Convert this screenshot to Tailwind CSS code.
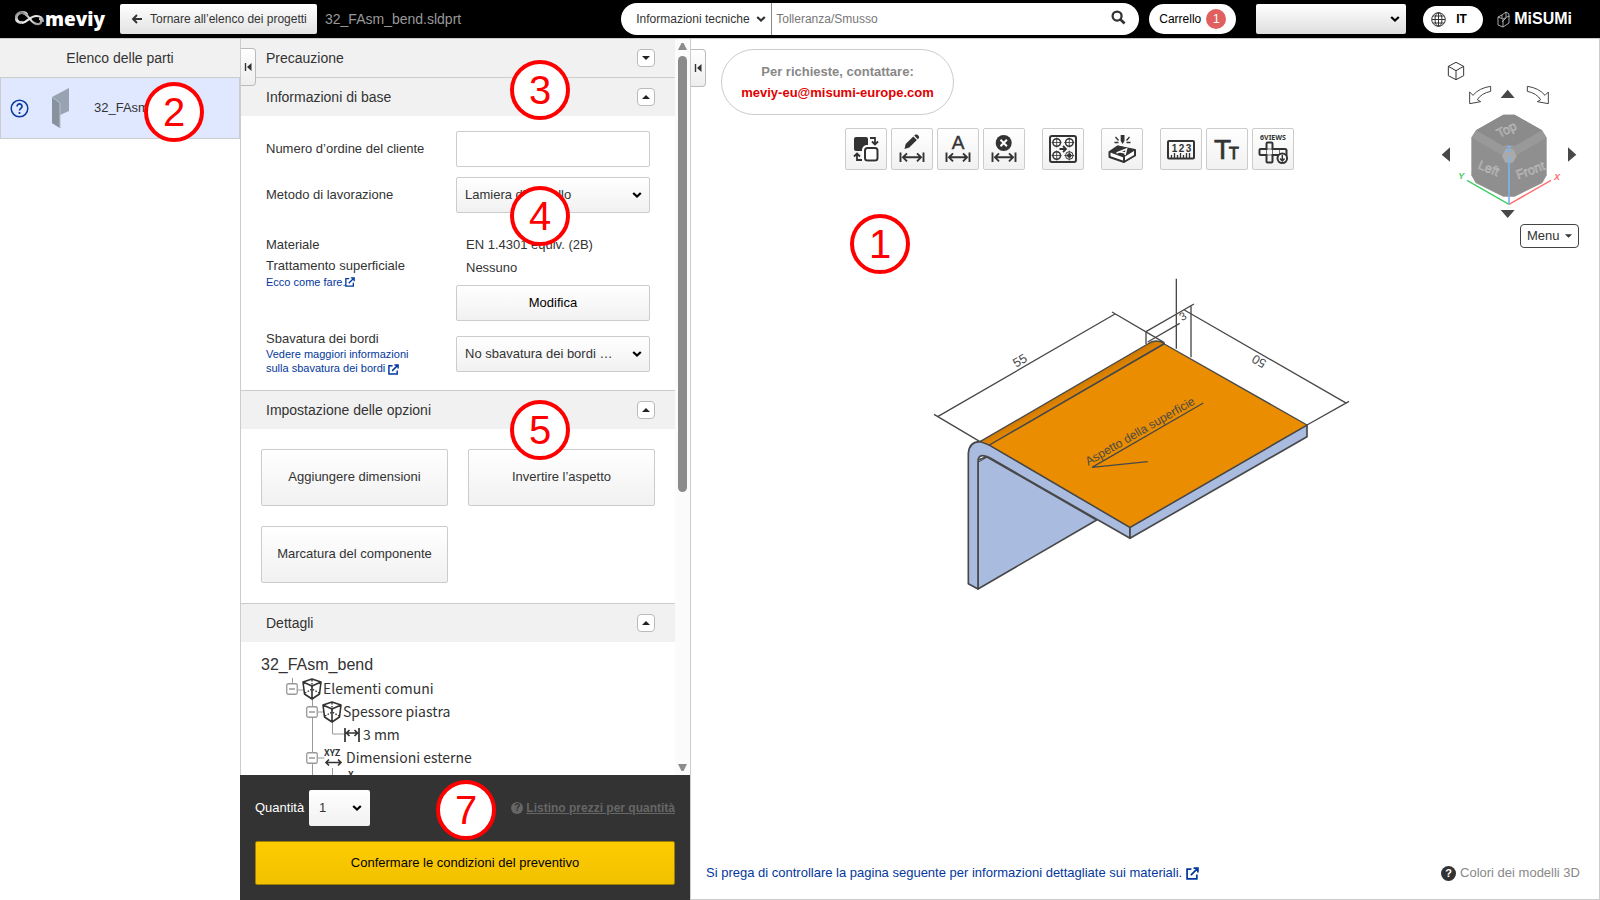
<!DOCTYPE html>
<html lang="it">

<head>
    <meta charset="UTF-8">
    <meta name="viewport" content="width=device-width, initial-scale=1.0">
    <title>meviy - 32_FAsm_bend.sldprt</title>
    <script src="https://cdn.jsdelivr.net/npm/@tailwindcss/browser@4"></script>
</head>

<body class="bg-white text-[#333] text-sm font-['Liberation_Sans',Arial,sans-serif]">
    <!-- shared symbols -->
    <svg class="hidden">
        <symbol id="chevron" viewBox="0 0 10 8">
            <path d="M1.2 2l3.8 3.6L8.800 2" fill="none" stroke="currentColor" stroke-width="2.2" />
        </symbol>
        <symbol id="external" viewBox="0 0 12 12">
            <path d="M5 2H1v9h9V7M4.500 7.500L10.500 1.500M7 1h4v4" fill="none" stroke="currentColor" stroke-width="1.6" />
        </symbol>
        <symbol id="collapse" viewBox="0 0 8 10">
            <path d="M1.500 1v8" stroke="currentColor" stroke-width="1.4" />
            <path d="M7.500 1v8L3 5z" fill="currentColor" />
        </symbol>
        <symbol id="measure" viewBox="0 0 42 42">
            <path d="M9.500 24.500V34M32.500 24.500V34M12 29.300h18M16 25.300l-4 4 4 4M26 25.300l4 4-4 4" fill="none" stroke="#333" stroke-width="1.900" />
        </symbol>
        <symbol id="box" viewBox="0 0 20 22">
            <path d="M10 1l9 3-1.500 12L10 21l-7.500-5L1 4zM1 4l9 4 9-4M10 8v13" fill="none" stroke="#333" stroke-width="1.600" stroke-linejoin="round" />
            <path d="M10 2v9M3 15l7-4 7 4" fill="none" stroke="#333" stroke-width="1.400" stroke-dasharray="1.500 1.500" />
        </symbol>
        <symbol id="minus" viewBox="0 0 12 12">
            <rect x=".75" y=".75" width="10.500" height="10.500" rx="1.500" fill="#fff" stroke="#999" stroke-width="1.300" />
            <path d="M3 6h6" stroke="#999" stroke-width="1.500" />
        </symbol>
    </svg>

    <div class="flex flex-col h-screen">
        <header class="flex shrink-0 items-center h-[38px] bg-black">
            <a href="#" class="flex items-center ml-[15px] w-[105px] text-white" aria-label="meviy">
                <svg class="w-[30px] h-[18px]" viewBox="0 0 30 18">
                    <defs>
                        <linearGradient id="silver" x1="0" y1="0" x2="1" y2="1">
                            <stop offset="0" stop-color="#777" />
                            <stop offset=".5" stop-color="#eee" />
                            <stop offset="1" stop-color="#888" />
                        </linearGradient>
                    </defs>
                    <path d="M12 5C10 1 3 2 1.500 6S4 14 8 12" fill="none" stroke="url(#silver)" stroke-width="3" />
                    <path d="M7 13c6-1 8-7 14-7 6 0 7 3 7 6M5 3c5-1 8 3 10 6s6 6 9 5 3-5 0-5" fill="none" stroke="url(#silver)" stroke-width="2.200" />
                </svg>
                <span class="font-['Open_Sans',sans-serif] font-extrabold text-[19px] leading-7">meviy</span>
            </a>
            <button class="flex items-center gap-2 h-[30px] w-[197px] pl-[11px] rounded-xs bg-linear-to-b from-white to-[#e2e2e2] text-xs whitespace-nowrap">
                <svg class="w-[11px] h-[10px]" viewBox="0 0 11 10">
                    <path d="M11 5H2M6 1L2 5l4 4" fill="none" stroke="#333" stroke-width="1.900" />
                </svg>
                Tornare all’elenco dei progetti
            </button>
            <span class="ml-2 text-[#999]">32_FAsm_bend.sldprt</span>

            <form class="flex items-center ml-auto w-[518px] h-8 rounded-full bg-white overflow-hidden">
                <div class="relative w-[151px] h-full border-r border-[#888]">
                    <select aria-label="Categoria" class="appearance-none w-full h-full pl-[15px] text-xs">
                        <option>Informazioni tecniche</option>
                    </select>
                    <svg class="absolute right-[5px] top-3 w-[10px] h-2 pointer-events-none"><use href="#chevron" /></svg>
                </div>
                <input type="text" aria-label="Cerca" placeholder="Tolleranza/Smusso" class="flex-1 h-full pl-1 text-xs outline-none placeholder:text-[#777]">
                <button type="button" class="mr-[13px] mb-1" aria-label="Cerca">
                    <svg class="w-[15px] h-[15px]" viewBox="0 0 16 16">
                        <circle cx="6.500" cy="6.500" r="4.800" fill="none" stroke="#333" stroke-width="2.400" />
                        <path d="M10 10l4.500 4.500" stroke="#333" stroke-width="3" />
                    </svg>
                </button>
            </form>
            <button class="flex items-center gap-[5px] ml-[10px] w-[87px] h-[30px] pl-[10px] rounded-full bg-white text-xs text-black">
                Carrello
                <span class="flex items-center justify-center w-5 h-5 rounded-full bg-[#e06060] text-white">1</span>
            </button>
            <div class="relative ml-5 text-black">
                <select aria-label="Account" class="appearance-none block w-[150px] h-[30px] rounded-xs bg-linear-to-b from-white to-[#dedede]">
                    <option></option>
                </select>
                <svg class="absolute right-[6px] top-[11px] w-[10px] h-2 pointer-events-none"><use href="#chevron" /></svg>
            </div>
            <button class="flex items-center gap-[10px] ml-[17px] w-[60px] h-[27px] pl-2 rounded-full bg-white text-black text-xs font-bold">
                <svg class="w-[15px] h-[15px]" viewBox="0 0 15 15">
                    <g fill="none" stroke="#333">
                        <circle cx="7.500" cy="7.500" r="6.800" />
                        <ellipse cx="7.500" cy="7.500" rx="3.500" ry="6.800" />
                        <path d="M7.500 1v13M1 7.500h13M2 4h11M2 11h11" />
                    </g>
                </svg>
                IT
            </button>
            <a href="#" class="flex items-center gap-1 ml-[14px] mr-[28px] text-white font-bold text-base" aria-label="MISUMI">
                <svg class="w-[13px] h-[17px]" viewBox="0 0 13 17">
                    <path d="M1 6l5 2v8l-5-2zM6 8l6-3v7l-6 4M1 6l4-2v3M5 4l4-3v5M9 1l3 2v3M5 11l4-4" fill="none" stroke="#bbb" stroke-width=".9" />
                </svg>
                MiSUMi
            </a>
        </header>

        <div class="relative flex flex-1 min-h-0 border-t border-[#ccc]">
            <!-- parts list -->
            <aside class="w-60 shrink-0">
                <h2 class="flex items-center justify-center h-[38px] bg-[#f1f1f1]">Elenco delle parti</h2>
                <div class="relative flex items-center h-[62px] border border-[#ccc] bg-[#dfe8ff]">
                    <svg class="ml-[9px] w-[19px] h-[19px]" viewBox="0 0 19 19">
                        <circle cx="9.500" cy="9.500" r="8.300" fill="none" stroke="#0a3a9e" stroke-width="1.500" />
                        <path d="M7 7.500c0-3.500 5.300-3.300 5 0 0 1.700-2.500 2-2.500 4" fill="none" stroke="#0a3a9e" stroke-width="1.700" />
                        <circle cx="9.500" cy="14" r="1.100" fill="#0a3a9e" />
                    </svg>
                    <svg class="ml-[22px] w-[19px] h-[42px]" viewBox="0 0 19 42">
                        <path d="M1 10L18 1v23l-9 4v13l-8-5z" fill="#98a3b1" />
                        <path d="M1 10l8 6v25l-8-5z" fill="#87929f" />
                        <path d="M1 10l8 6v25" fill="none" stroke="#b8c0c8" />
                    </svg>
                    <span class="ml-6 text-[13px]">32_FAsm_bend</span>
                    <span class="absolute left-[143px] top-1 flex items-center justify-center w-[60px] h-[60px] rounded-full border-4 border-[red] bg-white text-[red] text-[40px] leading-none">2</span>
                </div>
            </aside>

            <!-- settings -->
            <main class="relative flex flex-col w-[451px] shrink-0 border-x border-[#ccc]">
                <button aria-label="Chiudi elenco" class="absolute left-0 top-[9px] flex items-center justify-center w-[15px] h-[38px] rounded-r-sm border border-l-0 border-[#bbb] bg-linear-to-b from-white to-[#eee]">
                    <svg class="w-2 h-[10px]"><use href="#collapse" /></svg>
                </button>
                <div class="flex flex-1 min-h-0">
                    <div class="flex-1 overflow-hidden">
                        <section class="flex items-center justify-between h-[38px] pl-[25px] pr-5 bg-[#f1f1f1]">
                            <h2>Precauzione</h2>
                            <button aria-label="Apri" class="flex items-center justify-center w-[18px] h-[18px] rounded-sm border border-[#bbb] bg-white">
                                <svg class="w-2 h-1" viewBox="0 0 8 4"><path d="M0 0h8L4 4z" fill="#222" /></svg>
                            </button>
                        </section>

                        <section>
                            <div class="flex items-center justify-between h-[39px] pl-[25px] pr-5 border-t border-[#ccc] bg-[#f1f1f1]">
                                <h2>Informazioni di base</h2>
                                <button aria-label="Chiudi" class="flex items-center justify-center w-[18px] h-[18px] rounded-sm border border-[#bbb] bg-white">
                                    <svg class="w-2 h-1" viewBox="0 0 8 4"><path d="M0 4h8L4 0z" fill="#222" /></svg>
                                </button>
                            </div>
                            <div class="grid grid-cols-[190px_194px] pl-[25px] py-[15px] text-[13px]">
                                <label for="order" class="pt-2 leading-5">Numero d’ordine del cliente</label>
                                <input id="order" type="text" class="h-9 px-2 rounded-xs border border-[#ccc]">

                                <label for="method" class="mt-[10px] pt-2 leading-5">Metodo di lavorazione</label>
                                <div class="relative mt-[10px]">
                                    <select id="method" class="appearance-none block w-full h-9 pl-2 rounded-xs border border-[#ccc] bg-linear-to-b from-white to-[#f1f1f1]">
                                        <option>Lamiera di metallo</option>
                                    </select>
                                    <svg class="absolute right-2 top-[14px] w-[10px] h-2 text-black pointer-events-none"><use href="#chevron" /></svg>
                                </div>

                                <div class="pt-[21px]">
                                    <p class="leading-[21px]">Materiale</p>
                                    <p class="leading-[21px]">Trattamento superficiale</p>
                                    <a href="#" class="flex items-center text-[11px] leading-3 text-[#03389c]">Ecco come fare.<svg class="w-[10px] h-[10px]"><use href="#external" /></svg></a>
                                </div>
                                <div class="pt-5">
                                    <p class="pl-[10px] leading-[23px]">EN 1.4301 equiv. (2B)</p>
                                    <p class="pl-[10px] leading-[23px]">Nessuno</p>
                                    <button class="block w-full h-9 mt-[6px] rounded-xs border border-[#ccc] bg-linear-to-b from-white to-[#f1f1f1] text-black">Modifica</button>
                                </div>

                                <div class="pt-[10px]">
                                    <label for="deburr" class="block leading-4">Sbavatura dei bordi</label>
                                    <a href="#" class="block text-[11px] leading-[14px] text-[#03389c]">Vedere maggiori informazioni<br>sulla sbavatura dei bordi <svg class="inline w-[11px] h-[11px]"><use href="#external" /></svg></a>
                                </div>
                                <div class="relative mt-[15px]">
                                    <select id="deburr" class="appearance-none block w-full h-9 pl-2 rounded-xs border border-[#ccc] bg-linear-to-b from-white to-[#f1f1f1]">
                                        <option>No sbavatura dei bordi …</option>
                                    </select>
                                    <svg class="absolute right-2 top-[14px] w-[10px] h-2 text-black pointer-events-none"><use href="#chevron" /></svg>
                                </div>
                            </div>
                        </section>

                        <section>
                            <div class="flex items-center justify-between h-[39px] pl-[25px] pr-5 border-t border-[#ccc] bg-[#f1f1f1]">
                                <h2>Impostazione delle opzioni</h2>
                                <button aria-label="Chiudi" class="flex items-center justify-center w-[18px] h-[18px] rounded-sm border border-[#bbb] bg-white">
                                    <svg class="w-2 h-1" viewBox="0 0 8 4"><path d="M0 4h8L4 0z" fill="#222" /></svg>
                                </button>
                            </div>
                            <div class="grid grid-cols-2 gap-5 p-5 text-[13px]">
                                <button class="h-[57px] rounded-xs border border-[#ccc] bg-linear-to-b from-white to-[#f1f1f1]">Aggiungere dimensioni</button>
                                <button class="h-[57px] rounded-xs border border-[#ccc] bg-linear-to-b from-white to-[#f1f1f1]">Invertire l’aspetto</button>
                                <button class="h-[57px] rounded-xs border border-[#ccc] bg-linear-to-b from-white to-[#f1f1f1]">Marcatura del componente</button>
                            </div>
                        </section>

                        <section>
                            <div class="flex items-center justify-between h-[39px] pl-[25px] pr-5 border-t border-[#ccc] bg-[#f1f1f1]">
                                <h2>Dettagli</h2>
                                <button aria-label="Chiudi" class="flex items-center justify-center w-[18px] h-[18px] rounded-sm border border-[#bbb] bg-white">
                                    <svg class="w-2 h-1" viewBox="0 0 8 4"><path d="M0 4h8L4 0z" fill="#222" /></svg>
                                </button>
                            </div>
                            <div class="relative pl-5 pt-[11px]">
                                <h3 class="text-base leading-6">32_FAsm_bend</h3>
                                <!-- connecting lines of the tree -->
                                <svg class="absolute left-[50px] top-[36px] w-[60px] h-[110px]" viewBox="0 0 60 110">
                                    <path d="M1.500 0v12h12M21.500 20v90M21.500 34h12M41.500 44v12h12M21.500 80h12M41.500 90v20" fill="none" stroke="#999" />
                                </svg>
                                <ul class="relative font-['Noto_Sans_CJK_JP',sans-serif] text-sm leading-[23px]">
                                    <li class="flex items-center pl-[25px]"><svg class="w-3 h-3 mr-1"><use href="#minus" /></svg><svg class="w-5 h-[22px] mr-px"><use href="#box" /></svg>Elementi comuni</li>
                                    <li class="flex items-center pl-[45px]"><svg class="w-3 h-3 mr-1"><use href="#minus" /></svg><svg class="w-5 h-[22px] mr-px"><use href="#box" /></svg>Spessore piastra</li>
                                    <li class="flex items-center pl-[83px]"><svg class="w-[16px] h-[14px] mr-[3px]" viewBox="0 0 16 14"><path d="M1 0v14M15 0v14M2.500 5h11M5.500 2l-3 3 3 3M10.500 2l3 3-3 3" fill="none" stroke="#333" stroke-width="1.700" /></svg>3 mm</li>
                                    <li class="flex items-center pl-[45px]"><svg class="w-3 h-3 mr-[6px]"><use href="#minus" /></svg><svg class="w-[20px] h-5 mr-[2px]" viewBox="0 0 20 20"><text x="0" y="8" font-size="9" font-weight="bold" fill="#333">XYZ</text><path d="M2 14.500h15M5 11.500l-3 3 3 3M14 11.500l3 3-3 3" fill="none" stroke="#333" stroke-width="1.600" /></svg>Dimensioni esterne</li>
                                    <li class="flex items-start pl-[87px]"><span class="text-[9px] leading-3 font-bold">X</span></li>
                                </ul>
                            </div>
                        </section>
                    </div>

                    <!-- scroll track -->
                    <div class="flex flex-col items-center w-[15px] pt-1 pb-1 bg-[#fbfbfb]">
                        <svg class="w-[9px] h-[7px]" viewBox="0 0 9 7"><path d="M0 7h9L5.500 0h-2z" fill="#8b8b8b" /></svg>
                        <div class="w-[9px] h-[436px] mt-[6px] rounded-full bg-[#8b8b8b]"></div>
                        <svg class="w-[9px] h-[7px] mt-auto" viewBox="0 0 9 7"><path d="M0 0h9L5.500 7h-2z" fill="#8b8b8b" /></svg>
                    </div>
                </div>

                <footer class="shrink-0 -ml-px h-[125px] px-[15px] pt-[15px] bg-[#333] text-[13px]">
                    <div class="flex items-center">
                        <label for="qty" class="w-[54px] text-white">Quantità</label>
                        <div class="relative">
                            <select id="qty" class="appearance-none block w-[61px] h-9 pl-[10px] rounded-xs bg-linear-to-b from-white to-[#f1f1f1]">
                                <option>1</option>
                            </select>
                            <svg class="absolute right-2 top-[14px] w-[10px] h-2 text-black pointer-events-none"><use href="#chevron" /></svg>
                        </div>
                        <a href="#" class="flex items-center gap-[3px] ml-auto text-xs font-bold text-[#666]">
                            <span class="flex items-center justify-center w-3 h-3 rounded-full bg-[#666] text-[#333] text-[10px]">?</span>
                            <span class="underline">Listino prezzi per quantità</span>
                        </a>
                    </div>
                    <button class="block w-full h-11 mt-[15px] rounded-xs border border-[#a08000] bg-linear-to-b from-[#ffcc00] to-[#f1c100] text-black">Confermare le condizioni del preventivo</button>
                </footer>

                <span class="absolute left-[269px] top-[21px] flex items-center justify-center w-[60px] h-[60px] rounded-full border-4 border-[red] bg-white text-[red] text-[40px] leading-none">3</span>
                <span class="absolute left-[269px] top-[147px] flex items-center justify-center w-[60px] h-[60px] rounded-full border-4 border-[red] bg-white text-[red] text-[40px] leading-none">4</span>
                <span class="absolute left-[269px] top-[361px] flex items-center justify-center w-[60px] h-[60px] rounded-full border-4 border-[red] bg-white text-[red] text-[40px] leading-none">5</span>
                <span class="absolute left-[195px] bottom-[60px] flex items-center justify-center w-[60px] h-[60px] rounded-full border-4 border-[red] bg-white text-[red] text-[40px] leading-none">7</span>
            </main>

            <!-- 3D viewer -->
            <div class="relative flex flex-col flex-1 min-w-0 border-r border-b border-[#ccc]">
                <button aria-label="Chiudi pannello" class="absolute left-0 top-[10px] flex items-center justify-center w-[15px] h-[38px] rounded-r-sm border border-l-0 border-[#bbb] bg-linear-to-b from-white to-[#eee]">
                    <svg class="w-2 h-[10px]"><use href="#collapse" /></svg>
                </button>
                <div class="ml-[30px] mt-[10px] w-[233px] h-[66px] pt-[11px] rounded-full border border-[#ccc] text-center text-[13px] leading-[21px] font-bold">
                    <p class="text-[#888]">Per richieste, contattare:</p>
                    <a href="mailto:meviy-eu@misumi-europe.com" class="text-[#e00000]">meviy-eu@misumi-europe.com</a>
                </div>

                <div class="flex gap-[17px] ml-[154px] mt-[13px]">
                    <div class="flex gap-1">
                        <button aria-label="Inverti" class="w-[42px] h-[42px] rounded-xs border border-[#ccc] bg-linear-to-b from-white to-[#f1f1f1]">
                            <svg viewBox="1 1 40 40">
                                <rect x="9" y="9" width="14" height="14" rx="2" fill="#333" />
                                <rect x="19.500" y="19.500" width="13" height="13" rx="2.500" fill="#fff" stroke="#fff" stroke-width="5" />
                                <rect x="20" y="20" width="12.500" height="12.500" rx="2.500" fill="#fff" stroke="#333" stroke-width="2" />
                                <path d="M25 10h5v6M27 13.500l3 3 3-3M17 32h-5v-6M9 28.500l3-3 3 3" fill="none" stroke="#333" stroke-width="1.800" />
                            </svg>
                        </button>
                        <button aria-label="Modifica quota" class="w-[42px] h-[42px] rounded-xs border border-[#ccc] bg-linear-to-b from-white to-[#f1f1f1]">
                            <svg viewBox="1 1 40 40">
                                <path d="M13.500 21l1.200-5 7.600-7.600 3.600 3.600-7.600 7.600zM23.200 7.600l1.300-1c2-.6 4.300 1.800 3.500 3.500l-1.200 1.200z" fill="#333" />
                                <use href="#measure" width="42" height="42" />
                            </svg>
                        </button>
                        <button aria-label="Quota automatica" class="w-[42px] h-[42px] rounded-xs border border-[#ccc] bg-linear-to-b from-white to-[#f1f1f1]">
                            <svg viewBox="1 1 40 40">
                                <text x="21" y="21" font-size="19" text-anchor="middle" fill="#333" stroke="#333" stroke-width=".4">A</text>
                                <use href="#measure" width="42" height="42" />
                            </svg>
                        </button>
                        <button aria-label="Elimina quota" class="w-[42px] h-[42px] rounded-xs border border-[#ccc] bg-linear-to-b from-white to-[#f1f1f1]">
                            <svg viewBox="1 1 40 40">
                                <circle cx="20.700" cy="15" r="8" fill="#333" />
                                <path d="M17.500 11.800l6.400 6.400M23.900 11.800l-6.400 6.400" stroke="#fff" stroke-width="2" />
                                <use href="#measure" width="42" height="42" />
                            </svg>
                        </button>
                    </div>
                    <button aria-label="Fori" class="w-[42px] h-[42px] rounded-xs border border-[#ccc] bg-linear-to-b from-white to-[#f1f1f1]">
                        <svg viewBox="1 1 40 40">
                            <g fill="none" stroke="#333" stroke-width="1.500">
                                <rect x="8" y="8" width="26" height="26" rx="2" stroke-width="2" />
                                <circle cx="14.700" cy="14.500" r="3.800" />
                                <circle cx="27.300" cy="14.500" r="3.800" />
                                <circle cx="14.700" cy="27.500" r="3.800" />
                                <circle cx="27.300" cy="27.500" r="3.800" stroke-width="1" />
                                <circle cx="27.300" cy="27.500" r="1.500" fill="#333" />
                                <path d="M17.500 21h6M21 18l3 3-3 3" stroke-width="1.800" />
                                <path d="M9.500 14.500h10M14.700 9.500v10M22.300 14.500h10M27.300 9.500v10M9.500 27.500h10M14.700 22.500v10M22.300 27.500h10M27.300 22.500v10" stroke-width=".8" />
                            </g>
                        </svg>
                    </button>
                    <button aria-label="Marcatura" class="w-[42px] h-[42px] rounded-xs border border-[#ccc] bg-linear-to-b from-white to-[#f1f1f1]">
                        <svg viewBox="1 1 40 40">
                            <path d="M8.500 24l8-5.500 17.500 3.500v5.500l-11 6.500-14.500-5z" fill="#fff" stroke="#333" stroke-width="2" stroke-linejoin="round" />
                            <path d="M8 24l9-6.500 17.500 4.500-12 7.500zM22 28.500h2v6h-2z" fill="#333" />
                            <path d="M15.500 25l10-4-1.500 6M19 23.700l5 1.300" fill="none" stroke="#fff" stroke-width="1.500" />
                            <path d="M19.700 7h3.800v6l-1.900 3-1.900-3z" fill="#333" />
                            <path d="M14.500 9l3 3.500M13.500 14.500h4M28.500 9l-3 3.500M29.500 14.500h-4" stroke="#333" stroke-width="1.300" />
                        </svg>
                    </button>
                    <div class="flex gap-1">
                        <button aria-label="Misura" class="w-[42px] h-[42px] rounded-xs border border-[#ccc] bg-linear-to-b from-white to-[#f1f1f1]">
                            <svg viewBox="1 1 40 40">
                                <rect x="8" y="13" width="26" height="17.500" rx="1" fill="none" stroke="#333" stroke-width="2" />
                                <g font-size="10" font-weight="bold" text-anchor="middle" fill="#333">
                                    <text x="14.500" y="23.500">1</text>
                                    <text x="21.500" y="23.500">2</text>
                                    <text x="28.500" y="23.500">3</text>
                                </g>
                                <path d="M11.500 30v-3M14.500 30v-5M17.500 30v-3M20.500 30v-5M23.500 30v-3M26.500 30v-5M29.500 30v-5" stroke="#333" stroke-width="1.300" />
                            </svg>
                        </button>
                        <button aria-label="Dimensione testo" class="w-[42px] h-[42px] rounded-xs border border-[#ccc] bg-linear-to-b from-white to-[#f1f1f1]">
                            <svg viewBox="1 1 40 40">
                                <text x="8" y="31" font-size="28" fill="#333" stroke="#333" stroke-width=".6">T</text>
                                <text x="23" y="31" font-size="16" fill="#333" stroke="#333" stroke-width="1">T</text>
                            </svg>
                        </button>
                        <button aria-label="6 viste" class="w-[42px] h-[42px] rounded-xs border border-[#ccc] bg-linear-to-b from-white to-[#f1f1f1]">
                            <svg viewBox="1 1 40 40">
                                <text x="21" y="11.500" font-size="7" font-weight="bold" text-anchor="middle" font-family="Noto Sans" fill="#333">6VIEWS</text>
                                <path d="M14.500 21v-5.500q0-1 1-1h4q1 0 1 1V21H33q1.500 0 1.500 1.500V27h-14v6.500q0 1-1 1h-4q-1 0-1-1V27h-6q-1 0-1-1v-4q0-1 1-1z" fill="none" stroke="#333" stroke-width="2" />
                                <path d="M14.500 21h6v6h-6zM27.500 21v6" fill="none" stroke="#333" stroke-width=".7" />
                                <circle cx="30.300" cy="30.300" r="4.800" fill="#fff" stroke="#333" stroke-width="2" />
                                <path d="M30.300 27v5.500M28 30.500l2.300 2.500 2.300-2.500" fill="none" stroke="#333" stroke-width="1.500" />
                            </svg>
                        </button>
                    </div>
                </div>

                <!-- bent plate with its dimensions -->
                <svg class="self-center shrink-0 w-[450px] h-[330px] mt-[100px]" viewBox="0 0 1350 990">
                    <defs>
                        <linearGradient id="bend" gradientUnits="userSpaceOnUse" x1="430" y1="360" x2="450" y2="395">
                            <stop offset="0" stop-color="#c87400" />
                            <stop offset="1" stop-color="#eb8d00" />
                        </linearGradient>
                    </defs>
                    <g stroke="#484848" stroke-width="5" stroke-linejoin="round">
                        <path d="M174 570L200 560L530 750L174 957z" fill="#a9bbde" />
                        <path d="M145 550Q148 515 180 515Q190 514 208 525L630 772V805L212 565Q174 545 174 575V957L145 941z" fill="#a9bbde" />
                        <path d="M176 576L200 562" fill="none" stroke-width="3" />
                        <path d="M630 772L1161 465V500L630 805z" fill="#a9bbde" />
                        <path d="M208 525L733 222L1161 465L630 772z" fill="#eb8d00" stroke-width="4" />
                        <path d="M180 515L683 222Q705 205 733 220L208 525z" fill="url(#bend)" stroke-width="4" />
                    </g>
                    <g fill="none" stroke="#484848" stroke-width="4">
                        <path d="M53 440L585 132M42 433L180 515M576 126L733 218" />
                        <path d="M769 26V236M813 106V262M678 185L822 102M678 185V222M683 216L779 160" />
                        <path d="M793 120L1280 400M1161 465L1287 394" />
                        <path d="M850 399L516 592L683 575" />
                    </g>
                    <g fill="#484848">
                        <text font-size="38" transform="translate(288 293) rotate(-30)">55</text>
                        <text font-size="38" transform="translate(1042 273) rotate(210)">50</text>
                        <text font-size="34" transform="translate(786 154) rotate(-30)">3</text>
                        <text font-size="36" transform="translate(505 587) rotate(-30)">Aspetto della superficie</text>
                    </g>
                </svg>

                <div class="flex items-center justify-between mt-auto mb-4 pl-[15px] pr-[19px] text-[13px] leading-5">
                    <a href="#" class="flex items-center gap-1 text-[#03389c]">Si prega di controllare la pagina seguente per informazioni dettagliate sui materiali. <svg class="w-[13px] h-[13px]"><use href="#external" /></svg></a>
                    <button class="flex items-center gap-1 text-[#888]">
                        <span class="flex items-center justify-center w-[15px] h-[15px] rounded-full bg-[#333] text-white text-[11px] font-bold">?</span>
                        Colori dei modelli 3D
                    </button>
                </div>

                <!-- view cube -->
                <svg class="absolute -right-px top-[11px] w-[180px] h-[210px]" viewBox="0 0 540 630">
                    <path d="M108 37l23 12v28l-23 12-23-12V49zM85 49l23 13 23-13M108 62v27" fill="none" stroke="#333" stroke-width="3" />
                    <g fill="#fff" stroke="#444" stroke-width="3">
                        <path d="M212 109v15q-28 6-40 25l10 6-33 6V126l10 10q18-22 53-27z" />
                        <path d="M322 109v15q28 6 40 25l-10 6 33 6V126l-10 10q-18-22-53-27z" />
                    </g>
                    <path d="M242 144h42l-21-25zM242 480h42l-21 24zM90 292v43l-25-21zM444 292v43l25-21z" fill="#484848" />
                    <path d="M250 194h34l82 47 14 22v113l-13 23-83 41h-34l-83-41-13-23V263l14-22z" fill="#8f8f8f" />
                    <path d="M250 194h34l82 47-4 18-80 36h-30l-80-36-4-18z" fill="#8b8b8b" />
                    <path d="M168 241l82 47 16-4 18 4 82-47 14 22-90 52h-44l-92-52z" fill="#999" />
                    <path d="M246 318l12-22h20l12 22-12 20h-22z" fill="#aaa" />
                    <g fill="#999" stroke="#c4c4c4" stroke-width="1.500" font-size="38">
                        <text transform="translate(238 264) rotate(-27)">Top</text>
                        <text transform="translate(172 355) rotate(22)">Left</text>
                        <text transform="translate(294 388) rotate(-20)">Front</text>
                    </g>
                    <g fill="none" stroke-width="4">
                        <path d="M267 463L141 391" stroke="#3fce64" />
                        <path d="M267 463l126-72" stroke="#ff6b6b" />
                        <path d="M267 463V318" stroke="#78b4f0" stroke-width="5" />
                    </g>
                    <g font-size="27" font-weight="bold" font-style="italic">
                        <text x="115" y="388" fill="#3fce64">Y</text>
                        <text x="402" y="390" fill="#ff6b6b">X</text>
                        <text x="258" y="307" fill="#78b4f0">Z</text>
                    </g>
                </svg>
                <button class="absolute right-5 top-[185px] flex items-center justify-between w-[59px] h-6 px-[6px] rounded-sm border border-[#444] bg-white text-[13px]">
                    Menu
                    <svg class="w-[7px] h-1" viewBox="0 0 8 4"><path d="M0 0h8L4 4z" fill="#333" /></svg>
                </button>

                <span class="absolute left-[159px] top-[175px] flex items-center justify-center w-[60px] h-[60px] rounded-full border-4 border-[red] bg-white text-[red] text-[40px] leading-none">1</span>
            </div>
        </div>
    </div>
</body>

</html>
